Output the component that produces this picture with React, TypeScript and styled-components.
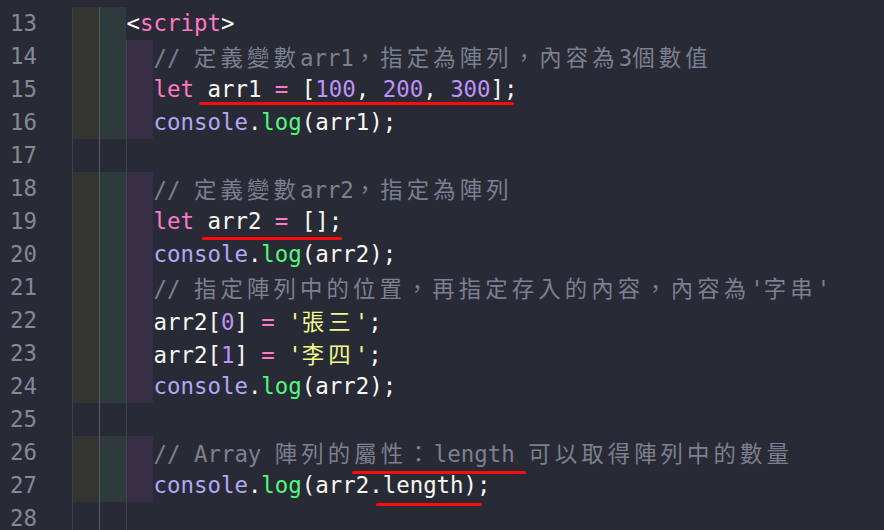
import React from "react";
import styled, { createGlobalStyle } from "styled-components";

const GlobalStyle = createGlobalStyle`
  html, body { margin: 0; padding: 0; background: #282a36; }
  body { overflow: hidden; }
`;

const MONO = `"DejaVu Sans Mono", "Liberation Mono", monospace`;
const CJK = `"Noto Sans CJK TC", "Noto Sans CJK SC", sans-serif`;

const COLORS: Record<string, string> = {
  p: "#f8f8f2",
  kw: "#ff79c6",
  tag: "#ff79c6",
  num: "#bd93f9",
  fn: "#50fa7b",
  obj: "#b3a8f5",
  str: "#f1fa8c",
  cmt: "#7c808f",
};

const FILLS = ["#343530", "#2e3a3b", "#372e46"];

const Editor = styled.div`
  width: 884px;
  height: 530px;
  background: #282a36;
  padding-top: 6.5px;
  box-sizing: border-box;
  font-family: ${MONO};
  font-size: 22.4px;
  line-height: 33px;
  overflow: hidden;
`;

const Row = styled.div`
  display: flex;
  height: 33px;
`;

const LineNo = styled.div`
  flex: none;
  width: 72px;
  padding-right: 35px;
  box-sizing: border-box;
  text-align: right;
  color: #858895;
`;

const IndentCell = styled.div<{ $fill?: string; $active?: boolean }>`
  flex: none;
  width: 27px;
  height: 33px;
  box-sizing: border-box;
  background: ${(p) => p.$fill || "transparent"};
  border-left: 1px solid ${(p) => (p.$active ? "#575a66" : "#3e414d")};
`;

const Code = styled.div`
  flex: none;
  white-space: pre;
  padding-left: 0.5px;
`;

const Tok = styled.span<{ $c: string }>`
  color: ${(p) => COLORS[p.$c]};
`;

const Cjk = styled.span`
  font-family: ${CJK};
  font-size: 22.4px;
  letter-spacing: 4.1px;
`;

const Mark = styled.span<{ $l: number; $r: number; $drop: number }>`
  position: relative;
  &::after {
    content: "";
    position: absolute;
    left: ${(p) => p.$l}px;
    right: ${(p) => p.$r}px;
    top: calc(100% + ${(p) => p.$drop}px);
    height: 3px;
    border-radius: 1.5px;
    background: #ff0a0a;
  }
`;

type T = { c: string; s: string };
type M = { mark: { l: number; r: number; drop: number }; toks: T[] };
type Seg = T | M;

const t = (c: string, s: string): T => ({ c, s });
const mk = (l: number, r: number, drop: number, toks: T[]): M => ({
  mark: { l, r, drop },
  toks,
});

const logLine = (arg: string): Seg[] => [
  t("obj", "console"),
  t("p", "."),
  t("fn", "log"),
  t("p", `(${arg});`),
];

type Line = { n: number; fill: number; guides: number; segs: Seg[] };

const LINES: Line[] = [
  { n: 13, fill: 2, guides: 2, segs: [t("p", "<"), t("tag", "script"), t("p", ">")] },
  { n: 14, fill: 3, guides: 3, segs: [t("cmt", "// 定義變數arr1，指定為陣列，內容為3個數值")] },
  {
    n: 15,
    fill: 3,
    guides: 3,
    segs: [
      t("kw", "let"),
      t("p", " "),
      mk(-8, -10, 0, [
        t("p", "arr1 "),
        t("kw", "="),
        t("p", " ["),
        t("num", "100"),
        t("p", ", "),
        t("num", "200"),
        t("p", ", "),
        t("num", "300"),
        t("p", "]"),
      ]),
      t("p", ";"),
    ],
  },
  { n: 16, fill: 3, guides: 3, segs: logLine("arr1") },
  { n: 17, fill: 0, guides: 3, segs: [] },
  { n: 18, fill: 3, guides: 3, segs: [t("cmt", "// 定義變數arr2，指定為陣列")] },
  {
    n: 19,
    fill: 3,
    guides: 3,
    segs: [
      t("kw", "let"),
      t("p", " "),
      mk(-5, 0, 3, [t("p", "arr2 "), t("kw", "="), t("p", " [];")]),
    ],
  },
  { n: 20, fill: 3, guides: 3, segs: logLine("arr2") },
  { n: 21, fill: 3, guides: 3, segs: [t("cmt", "// 指定陣列中的位置，再指定存入的內容，內容為'字串'")] },
  {
    n: 22,
    fill: 3,
    guides: 3,
    segs: [t("p", "arr2["), t("num", "0"), t("p", "] "), t("kw", "="), t("p", " "), t("str", "'張三'"), t("p", ";")],
  },
  {
    n: 23,
    fill: 3,
    guides: 3,
    segs: [t("p", "arr2["), t("num", "1"), t("p", "] "), t("kw", "="), t("p", " "), t("str", "'李四'"), t("p", ";")],
  },
  { n: 24, fill: 3, guides: 3, segs: logLine("arr2") },
  { n: 25, fill: 0, guides: 3, segs: [] },
  {
    n: 26,
    fill: 3,
    guides: 3,
    segs: [
      t("cmt", "// Array 陣列的"),
      mk(-2, -11, 4.5, [t("cmt", "屬性：length")]),
      t("cmt", " 可以取得陣列中的數量"),
    ],
  },
  {
    n: 27,
    fill: 3,
    guides: 3,
    segs: [
      t("obj", "console"),
      t("p", "."),
      t("fn", "log"),
      t("p", "(arr2."),
      mk(-6.5, -5, 5.5, [t("p", "length)")]),
      t("p", ";"),
    ],
  },
  { n: 28, fill: 0, guides: 3, segs: [] },
];

const CJK_RE = /([\u3000-\u9fff\uff00-\uffef]+)/;

const renderText = (s: string) =>
  s.split(CJK_RE).map((part, i) =>
    i % 2 === 1 ? <Cjk key={i}>{part}</Cjk> : part ? <React.Fragment key={i}>{part}</React.Fragment> : null
  );

const renderTok = (tok: T, i: number) => (
  <Tok key={i} $c={tok.c}>
    {renderText(tok.s)}
  </Tok>
);

export default function App() {
  return (
    <>
      <GlobalStyle />
      <Editor>
        {LINES.map((line) => (
          <Row key={line.n}>
            <LineNo>{line.n}</LineNo>
            {Array.from({ length: line.guides }).map((_, i) => (
              <IndentCell key={i} $fill={i < line.fill ? FILLS[i] : undefined} $active={i === 1} />
            ))}
            <Code>
              {line.segs.map((seg, i) =>
                "mark" in seg ? (
                  <Mark key={i} $l={seg.mark.l} $r={seg.mark.r} $drop={seg.mark.drop}>
                    {seg.toks.map(renderTok)}
                  </Mark>
                ) : (
                  renderTok(seg, i)
                )
              )}
            </Code>
          </Row>
        ))}
      </Editor>
    </>
  );
}
